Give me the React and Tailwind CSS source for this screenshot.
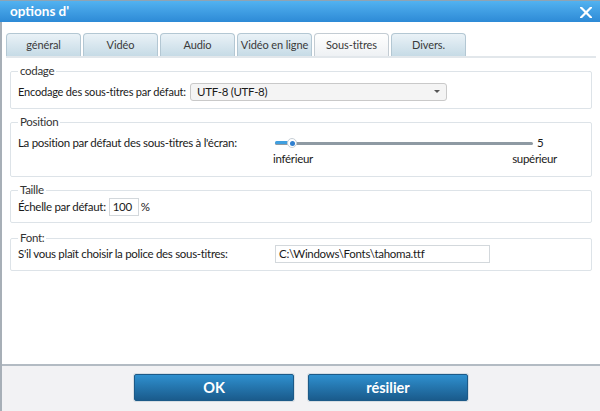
import React from "react";

const tabs = ["général", "Vidéo", "Audio", "Vidéo en ligne", "Sous-titres", "Divers."];

function Tab({ label, active }) {
  return (
    <div
      className={
        "flex h-[23px] w-[75px] items-center justify-center whitespace-nowrap rounded-t-[4px] border border-b-0 text-[11px] tracking-[-0.1px] text-[#3a3a3a] " +
        (active
          ? "border-[#c3ccd3] bg-gradient-to-b from-[#ffffff] to-[#eef1f4]"
          : "border-[#b3c7d3] bg-gradient-to-b from-[#eaf2f7] to-[#c6dbe6]")
      }
    >
      {label}
    </div>
  );
}

function Group({ title, children, className = "" }) {
  return (
    <fieldset className={"mx-[8px] rounded-[2px] border border-[#dde3e8] pl-[7px] pr-[7px] " + className}>
      <legend className="px-[2px] text-[11.5px] leading-[14px] text-[#333]">{title}</legend>
      {children}
    </fieldset>
  );
}

export default function App() {
  return (
    <div
      className="flex h-[411px] w-[600px] flex-col overflow-hidden bg-white text-[#1a1a1a]"
      style={{ fontFamily: 'Lato, "Noto Sans", sans-serif' }}
    >
      {/* Title bar */}
      <div className="flex h-[22px] shrink-0 items-center justify-between border-t border-[#8fa3b3] bg-gradient-to-b from-[#52b2f0] to-[#2d8ad6] pl-[10px] pr-[8px]">
        <span className="text-[13.5px] font-bold leading-none text-white">options d'</span>
        <svg width="12" height="11" viewBox="0 0 12 11" className="mt-[1px]">
          <path d="M1 0.5 L11 10.5 M11 0.5 L1 10.5" stroke="white" strokeWidth="2.2" strokeLinecap="square" />
        </svg>
      </div>

      {/* Body */}
      <div className="flex flex-1 flex-col border-l-2 border-[#a7afb7]">
        {/* Tabs */}
        <div className="ml-[4px] mr-[4px] mt-[11px] flex gap-[2px] border-b-2 border-[#e2e7eb]">
          {tabs.map((t) => (
            <Tab key={t} label={t} active={t === "Sous-titres"} />
          ))}
        </div>

        <div className="mt-[6px] flex flex-col whitespace-nowrap text-[11.5px] tracking-[-0.3px]">
          {/* codage */}
          <Group title="codage" className="pb-[6px]">
            <div className="mt-[4px] flex h-[20px] items-center">
              <span className="w-[172px] shrink-0 text-[11px] tracking-[-0.2px]">Encodage des sous-titres par défaut:</span>
              <div className="flex h-[18px] w-[257px] items-center justify-between rounded-[3px] border border-[#c9c9c9] bg-[#f4f4f4] pl-[6px] pr-[6px]">
                <span>UTF-8 (UTF-8)</span>
                <svg width="6" height="4" viewBox="0 0 6 4">
                  <path d="M0 0 H6 L3 3 Z" fill="#555" />
                </svg>
              </div>
            </div>
          </Group>

          {/* Position */}
          <Group title="Position" className="mt-[6px] pb-[9px]">
            <div className="mt-[6px] flex h-[16px] items-center">
              <span className="w-[257px] shrink-0">La position par défaut des sous-titres à l'écran:</span>
              <div className="relative flex h-[16px] w-[258px] items-center">
                <div className="h-[3px] w-full rounded-full bg-[#8e9aa3]" />
                <div className="absolute left-0 top-[6px] h-[3px] w-[17px] rounded-full bg-[#3f9fe0]" />
                <div className="absolute left-[12px] top-[3px] flex h-[10px] w-[10px] items-center justify-center rounded-full border border-[#c7cfd6] bg-white">
                  <div className="h-[5px] w-[5px] rounded-full bg-[#2f7fcf]" />
                </div>
              </div>
              <span className="ml-[4px]">5</span>
            </div>
            <div className="flex h-[16px] items-center">
              <span className="ml-[255px]">inférieur</span>
              <span className="ml-auto mr-[27px]">supérieur</span>
            </div>
          </Group>

          {/* Taille */}
          <Group title="Taille" className="mt-[6px] pb-[6px]">
            <div className="mt-[1px] flex h-[18px] items-center">
              <span>Échelle par défaut:</span>
              <div className="ml-[3px] flex h-[18px] w-[30px] items-center border border-[#d3d8dc] bg-white pl-[3px]">100</div>
              <span className="ml-[2px]">%</span>
            </div>
          </Group>

          {/* Font */}
          <Group title="Font:" className="mt-[8px] pb-[7px]">
            <div className="flex h-[18px] items-center">
              <span className="w-[257px] shrink-0">S'il vous plaît choisir la police des sous-titres:</span>
              <div className="flex h-[18px] w-[215px] items-center border border-[#d3d8dc] bg-white pl-[3px]">
                C:\Windows\Fonts\tahoma.ttf
              </div>
            </div>
          </Group>
        </div>

        <div className="flex-1" />

        {/* Footer */}
        <div className="flex h-[47px] shrink-0 items-start justify-center gap-[14px] border-t-2 border-[#b3bbc3] bg-[#f2f2f4] pt-[8px]">
          <button className="h-[27px] w-[160px] rounded-[2px] border border-[#1c5a88] bg-gradient-to-b from-[#2f90cf] to-[#1a5b8c] text-[14.5px] font-bold text-white shadow-[0_0_0_1px_#d6dde3]">
            OK
          </button>
          <button className="h-[27px] w-[160px] rounded-[2px] border border-[#1c5a88] bg-gradient-to-b from-[#2f90cf] to-[#1a5b8c] text-[14.5px] font-bold text-white shadow-[0_0_0_1px_#d6dde3]">
            résilier
          </button>
        </div>
      </div>
    </div>
  );
}
